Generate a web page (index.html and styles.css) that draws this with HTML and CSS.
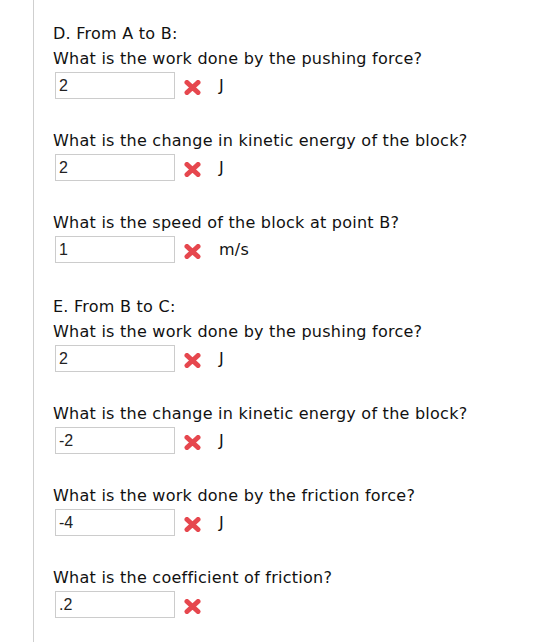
FILE: index.html
```html
<!DOCTYPE html>
<html lang="en">
<head>
    <meta charset="UTF-8">
    <meta name="viewport" content="width=device-width, initial-scale=1.0">
    <title>Work and Energy</title>
    <link rel="stylesheet" href="styles.css">
</head>
<body>
    <div class="sheet">
        <div class="part">
            <div class="part-title">D. From A to B:</div>

            <div class="question">
                <div class="prompt">What is the work done by the pushing force?</div>
                <div class="answer">
                    <input class="field" type="text" value="2">
                    <svg class="wrong" width="17" height="15" viewBox="0 0 17 15"><path d="M3 2.5 L14 12.5 M14 2.5 L3 12.5"/></svg>
                    <span class="unit">J</span>
                </div>
            </div>

            <div class="question">
                <div class="prompt">What is the change in kinetic energy of the block?</div>
                <div class="answer">
                    <input class="field" type="text" value="2">
                    <svg class="wrong" width="17" height="15" viewBox="0 0 17 15"><path d="M3 2.5 L14 12.5 M14 2.5 L3 12.5"/></svg>
                    <span class="unit">J</span>
                </div>
            </div>

            <div class="question">
                <div class="prompt">What is the speed of the block at point B?</div>
                <div class="answer">
                    <input class="field" type="text" value="1">
                    <svg class="wrong" width="17" height="15" viewBox="0 0 17 15"><path d="M3 2.5 L14 12.5 M14 2.5 L3 12.5"/></svg>
                    <span class="unit">m/s</span>
                </div>
            </div>
        </div>

        <div class="part">
            <div class="part-title">E. From B to C:</div>

            <div class="question">
                <div class="prompt">What is the work done by the pushing force?</div>
                <div class="answer">
                    <input class="field" type="text" value="2">
                    <svg class="wrong" width="17" height="15" viewBox="0 0 17 15"><path d="M3 2.5 L14 12.5 M14 2.5 L3 12.5"/></svg>
                    <span class="unit">J</span>
                </div>
            </div>

            <div class="question">
                <div class="prompt">What is the change in kinetic energy of the block?</div>
                <div class="answer">
                    <input class="field" type="text" value="-2">
                    <svg class="wrong" width="17" height="15" viewBox="0 0 17 15"><path d="M3 2.5 L14 12.5 M14 2.5 L3 12.5"/></svg>
                    <span class="unit">J</span>
                </div>
            </div>

            <div class="question">
                <div class="prompt">What is the work done by the friction force?</div>
                <div class="answer">
                    <input class="field" type="text" value="-4">
                    <svg class="wrong" width="17" height="15" viewBox="0 0 17 15"><path d="M3 2.5 L14 12.5 M14 2.5 L3 12.5"/></svg>
                    <span class="unit">J</span>
                </div>
            </div>

            <div class="question">
                <div class="prompt">What is the coefficient of friction?</div>
                <div class="answer">
                    <input class="field" type="text" value=".2">
                    <svg class="wrong" width="17" height="15" viewBox="0 0 17 15"><path d="M3 2.5 L14 12.5 M14 2.5 L3 12.5"/></svg>
                </div>
            </div>
        </div>
    </div>
</body>
</html>
```

FILE: styles.css
```css
body {
    margin: 0;
    background: white;
    font-family: "DejaVu Sans", Verdana, sans-serif;
    font-size: 16px;
    color: #111;
}
.sheet {
    margin-left: 33px;
    border-left: 1px solid #cfcfcf;
    padding: 21px 0 0 19px;
    min-height: 642px;
    box-sizing: border-box;
}
.part + .part { margin-top: 31px; }
.part-title, .prompt {
    line-height: 25px;
    letter-spacing: 0.25px;
}
.question + .question { margin-top: 29px; }
.answer {
    display: flex;
    align-items: center;
    margin-top: 1px;
}
.field {
    width: 120px;
    height: 27px;
    box-sizing: border-box;
    margin: 0 0 0 2px;
    padding: 0 3px;
    border: 1px solid #cccccc;
    font-family: "Liberation Sans", Arial, sans-serif;
    font-size: 16px;
    color: #222;
    background: white;
}
.wrong {
    margin: 4px 0 0 9px;
    fill: none;
    stroke: #e6474e;
    stroke-width: 5;
    stroke-linecap: round;
}
.unit {
    margin-left: 18px;
    letter-spacing: 0.25px;
}
```
